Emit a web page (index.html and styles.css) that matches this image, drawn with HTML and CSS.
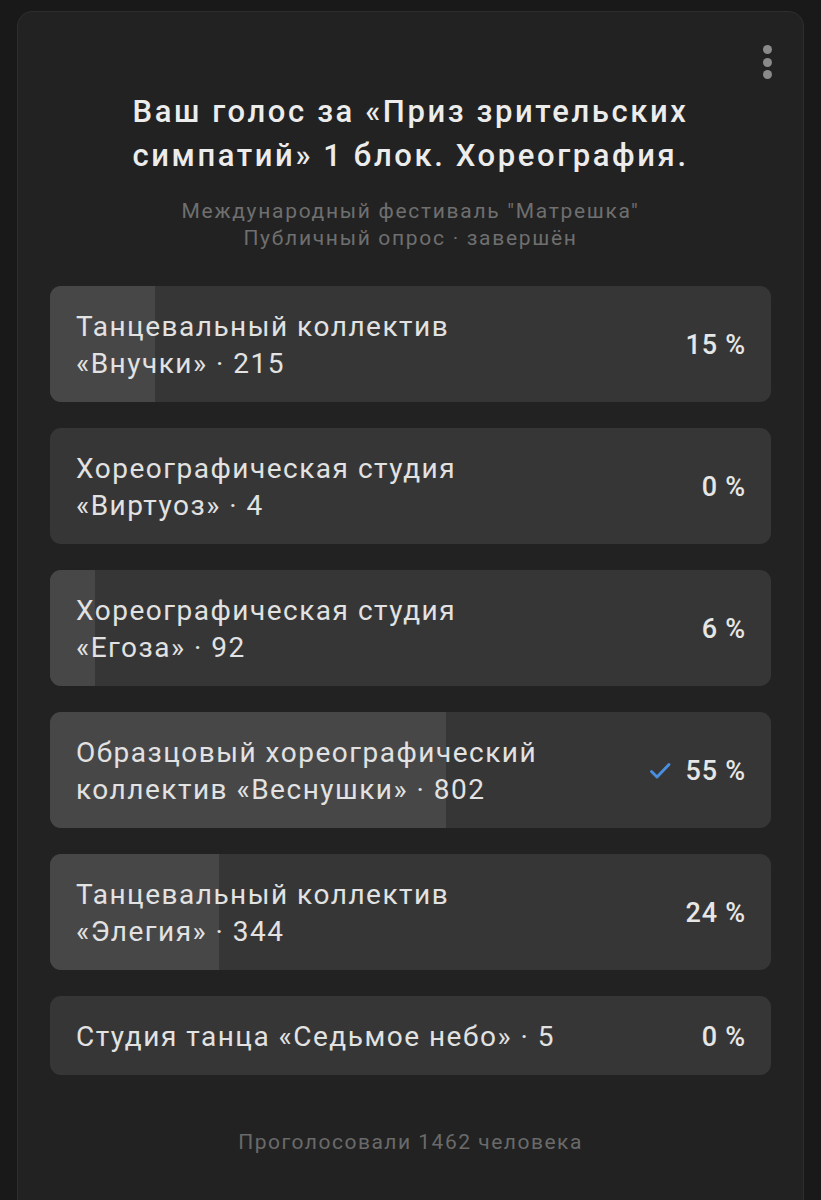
FILE: index.html
```html
<!DOCTYPE html>
<html lang="ru">
<head>
  <meta charset="UTF-8" />
  <meta name="viewport" content="width=device-width, initial-scale=1.0"/>
  <title>Опрос</title>
  <link rel="stylesheet" href="styles.css">
</head>
<body>
  <div class="poll-card">
    <button class="menu-btn" aria-label="Меню">
      <span></span><span></span><span></span>
    </button>

    <h1 class="poll-title">Ваш голос за «Приз зрительских симпатий» 1 блок. Хореография.</h1>
    <div class="poll-meta">
      Международный фестиваль "Матрешка"<br>
      Публичный опрос · завершён
    </div>

    <div class="options">
      <div class="option">
        <div class="fill" style="width:14.6%"></div>
        <div class="label">Танцевальный коллектив<br>«Внучки» · 215</div>
        <div class="percent">15 %</div>
      </div>
      <div class="option">
        <div class="fill" style="width:0%"></div>
        <div class="label">Хореографическая студия<br>«Виртуоз» · 4</div>
        <div class="percent">0 %</div>
      </div>
      <div class="option">
        <div class="fill" style="width:6.2%"></div>
        <div class="label">Хореографическая студия<br>«Егоза» · 92</div>
        <div class="percent">6 %</div>
      </div>
      <div class="option">
        <div class="fill" style="width:54.9%"></div>
        <div class="label">Образцовый хореографический<br>коллектив «Веснушки» · 802</div>
        <div class="percent">
          <svg class="check" viewBox="0 0 24 24" width="24" height="24">
            <path d="M3.5 12.5 L9 18 L21 5.5" fill="none" stroke="#4a8ee0" stroke-width="2.9" stroke-linecap="round" stroke-linejoin="round"/>
          </svg>
          55 %
        </div>
      </div>
      <div class="option">
        <div class="fill" style="width:23.5%"></div>
        <div class="label">Танцевальный коллектив<br>«Элегия» · 344</div>
        <div class="percent">24 %</div>
      </div>
      <div class="option">
        <div class="fill" style="width:0%"></div>
        <div class="label">Студия танца «Седьмое небо» · 5</div>
        <div class="percent">0 %</div>
      </div>
    </div>

    <div class="poll-footer">Проголосовали 1462 человека</div>
  </div>
</body>
</html>
```

FILE: styles.css
```css
* {
  margin: 0;
  padding: 0;
  box-sizing: border-box;
}
body {
  font-family: Roboto, "Noto Sans", Arial, sans-serif;
  background-color: #191919;
  padding: 11px 17px 0 17px;
  height: 1200px;
  overflow: hidden;
}
.poll-card {
  position: relative;
  width: 787px;
  min-height: 1250px;
  background-color: #222222;
  border: 1px solid #2e2e2e;
  border-radius: 15px;
  padding: 78px 32px 0 32px;
}
.menu-btn {
  position: absolute;
  top: 33px;
  right: 31px;
  display: flex;
  flex-direction: column;
  gap: 3.5px;
  background: none;
  border: none;
}
.menu-btn span {
  width: 9px;
  height: 9px;
  border-radius: 50%;
  background: #8a8a8a;
}
.poll-title {
  font-size: 31px;
  font-weight: 500;
  line-height: 44px;
  letter-spacing: 2.6px;
  color: #ececec;
  text-align: center;
  padding: 0 50px;
}
.poll-meta {
  margin-top: 20px;
  font-size: 21px;
  line-height: 27px;
  letter-spacing: 1.7px;
  color: #6f6f6f;
  text-align: center;
}
.options {
  margin-top: 34px;
  display: flex;
  flex-direction: column;
  gap: 26px;
}
.option {
  position: relative;
  display: flex;
  align-items: center;
  justify-content: space-between;
  background-color: #363636;
  border-radius: 11px;
  overflow: hidden;
  padding: 22px 25px 20px 26px;
}
.fill {
  position: absolute;
  left: 0;
  top: 0;
  bottom: 0;
  background-color: #474747;
}
.label {
  position: relative;
  font-size: 28px;
  line-height: 37px;
  letter-spacing: 1.5px;
  color: #e2e2e2;
}
.percent {
  position: relative;
  display: flex;
  align-items: center;
  gap: 14px;
  font-size: 27px;
  font-weight: 500;
  letter-spacing: 0.8px;
  color: #e6e6e6;
}
.check {
  width: 24px;
  height: 24px;
}
.poll-footer {
  margin-top: 53px;
  font-size: 21px;
  line-height: 28px;
  letter-spacing: 1.5px;
  color: #6a6a6a;
  text-align: center;
}
```
